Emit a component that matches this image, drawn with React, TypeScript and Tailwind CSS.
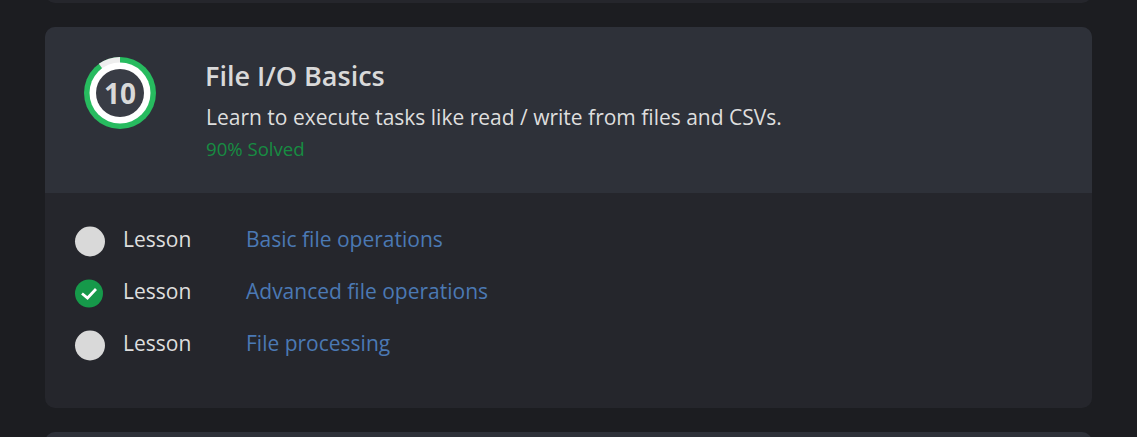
const font = { fontFamily: '"Open Sans", "Noto Sans", sans-serif' };

function Ring() {
  return (
    <div className="relative w-[72px] h-[72px] shrink-0">
      <svg width="72" height="72" viewBox="0 0 72 72" className="absolute inset-0">
        <circle cx="36" cy="36" r="36" fill="#27bb5f" />
        <path d="M36 36 L36 0 A36 36 0 0 0 14.84 6.87 Z" fill="#eeeeee" />
        <circle cx="36" cy="36" r="30.5" fill="#ffffff" />
        <circle cx="36" cy="36" r="24" fill="#393c45" />
      </svg>
      <div className="absolute inset-0 flex items-center justify-center text-[28px] font-bold text-[#d9d9d9]">10</div>
    </div>
  );
}

function Row({ done, title }: { done?: boolean; title: string }) {
  return (
    <div className="flex items-center h-[52px]">
      <div className="w-[30px] flex justify-start translate-y-[1.5px]">
        {done ? (
          <div className="w-[28px] h-[28px] rounded-full bg-[#16994a] flex items-center justify-center">
            <svg width="16" height="16" viewBox="0 0 16 16" fill="none">
              <path d="M1 8 L6.5 12.5 L15 3.5" stroke="#ffffff" strokeWidth="2.8" />
            </svg>
          </div>
        ) : (
          <div className="w-[30px] h-[30px] rounded-full bg-[#d9d9d9]" />
        )}
      </div>
      <div className="ml-[18px] w-[123px] text-[21px] text-[#dedede]">Lesson</div>
      <div className="text-[21px] text-[#4b79b4]">{title}</div>
    </div>
  );
}

export default function App() {
  return (
    <div className="h-[437px] overflow-hidden bg-[#1c1d21] px-[45px]" style={font}>
      <div className="w-[1047px] h-[40px] -mt-[37px] rounded-[10px] bg-[#25262c]" />
      <div className="w-[1047px] mt-[24px] rounded-[10px] overflow-hidden bg-[#25262c]">
        <div className="h-[166px] bg-[#2e3139] flex pl-[39px] pt-[30px]">
          <Ring />
          <div className="ml-[50px]">
            <div className="-ml-px mb-[2px] text-[27px] font-semibold leading-[38px] text-[#d9d9d9]">File I/O Basics</div>
            <div className="text-[21px] leading-[40px] text-[#dedede]">Learn to execute tasks like read / write from files and CSVs.</div>
            <div className="text-[18.6px] leading-[24px] text-[#178c42]">90% Solved</div>
          </div>
        </div>
        <div className="pl-[30px] pt-[21px] pb-[38px]">
          <Row title="Basic file operations" />
          <Row done title="Advanced file operations" />
          <Row title="File processing" />
        </div>
      </div>
      <div className="w-[1047px] h-[40px] mt-[24px] rounded-[10px] bg-[#2e3139]" />
    </div>
  );
}
